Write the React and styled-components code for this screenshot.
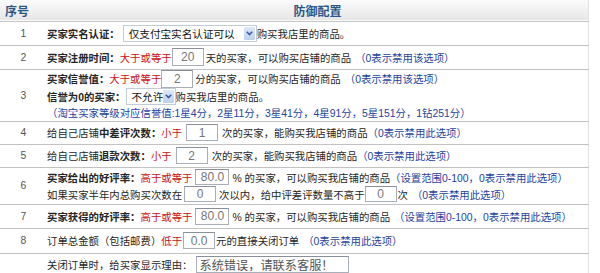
import styled, { createGlobalStyle } from "styled-components";

const GlobalStyle = createGlobalStyle`
  html, body {
    margin: 0;
    padding: 0;
    background: #fff;
  }
  body {
    font-family: "Liberation Sans", "Noto Sans CJK SC", sans-serif;
    font-size: 10.4px;
    color: #262626;
  }
`;

const Table = styled.table`
  width: 589px;
  border-collapse: collapse;
  border-right: 1px solid #e2e2e2;
  table-layout: fixed;
`;

const HeadRow = styled.tr`
  height: 21px;
  background: linear-gradient(#fbfbfb, #e6e6e6);
  border-bottom: 1px solid #c6c6c6;
`;

const HeadCell = styled.th`
  padding: 0 0 0 ${(p) => (p.$left ? "5px" : "0")};
  text-align: ${(p) => (p.$left ? "left" : "center")};
  font-size: 12px;
  font-weight: bold;
  color: #2b5787;
  width: ${(p) => p.$w || "auto"};
`;

const Row = styled.tr`
  height: ${(p) => p.$h}px;
  border-bottom: 1px solid #c2c2c2;
`;

const NumCell = styled.td`
  text-align: center;
  color: #555;
  padding: 0;
  vertical-align: middle;
`;

const Cell = styled.td`
  padding: 0;
  vertical-align: middle;
`;

const Line = styled.div`
  display: flex;
  align-items: center;
  height: ${(p) => p.$h || 17}px;
  white-space: nowrap;
`;

const B = styled.b`
  font-weight: bold;
`;

const Red = styled.span`
  color: #cc1010;
`;

const Blue = styled.span`
  color: #2442a0;
  margin-left: ${(p) => p.$gap || 0}px;
`;

const Input = styled.div`
  box-sizing: border-box;
  width: ${(p) => p.$w || 32}px;
  height: ${(p) => p.$h || 17}px;
  border: 1px solid #a9afb8;
  border-top-color: #8a9099;
  background: #fff;
  color: ${(p) => (p.$wide ? "#555" : "#777")};
  font-size: ${(p) => (p.$wide ? "12.2px" : "12px")};
  display: flex;
  align-items: center;
  justify-content: ${(p) => (p.$wide ? "flex-start" : "center")};
  padding-left: ${(p) => (p.$wide ? "2px" : "0")};
  margin: 0 ${(p) => p.$mr || 0}px 0 ${(p) => p.$ml || 0}px;
  overflow: hidden;
`;

const Select = styled.div`
  box-sizing: border-box;
  width: ${(p) => p.$w}px;
  height: 17px;
  border: 1px solid #c3cbd6;
  background: #fff;
  display: flex;
  align-items: center;
  justify-content: space-between;
  padding-left: 5px;
  margin-left: ${(p) => p.$ml || 0}px;
  font-size: 10.6px;
  color: #111;
`;

const Arrow = styled.span`
  width: 11px;
  height: 13px;
  margin-right: 1px;
  background: linear-gradient(#dde8f8, #bcd0ee);
  border-radius: 1px;
  display: flex;
  align-items: center;
  justify-content: center;
`;

const SelectArrow = () => (
  <Arrow>
    <svg width="7" height="5" viewBox="0 0 7 5">
      <path d="M0.8 0.8 L3.5 3.6 L6.2 0.8" fill="none" stroke="#3b5c9c" strokeWidth="1.6" />
    </svg>
  </Arrow>
);

const App = () => (
  <>
    <GlobalStyle />
    <Table>
      <thead>
        <HeadRow>
          <HeadCell $left $w="42px">序号</HeadCell>
          <HeadCell>防御配置</HeadCell>
        </HeadRow>
      </thead>
      <tbody>
        <Row $h={24}>
          <NumCell>1</NumCell>
          <Cell>
            <Line>
              <B>买家实名认证：</B>
              <Select $w={134} $ml={3}>
                仅支付宝实名认证可以
                <SelectArrow />
              </Select>
              购买我店里的商品。
            </Line>
          </Cell>
        </Row>
        <Row $h={24}>
          <NumCell>2</NumCell>
          <Cell>
            <Line $h={18}>
              <B>买家注册时间：</B>
              <Red>大于或等于</Red>
              <Input $h={18} $mr={2}>20</Input>
              天的买家，可以购买店铺的商品
              <Blue $gap={4}>（0表示禁用该选项）</Blue>
            </Line>
          </Cell>
        </Row>
        <Row $h={51}>
          <NumCell>3</NumCell>
          <Cell>
            <Line $h={18}>
              <B>买家信誉值：</B>
              <Red>大于或等于</Red>
              <Input $h={18} $mr={2}>2</Input>
              分的买家，可以购买店铺的商品
              <Blue $gap={4}>（0表示禁用该选项）</Blue>
            </Line>
            <Line>
              <B>信誉为0的买家：</B>
              <Select $w={50}>
                不允许
                <SelectArrow />
              </Select>
              购买我店里的商品。
            </Line>
            <Line $h={16}>
              <Blue>（淘宝买家等级对应信誉值:1星4分，2星11分，3星41分，4星91分，5星151分，1钻251分）</Blue>
            </Line>
          </Cell>
        </Row>
        <Row $h={23}>
          <NumCell>4</NumCell>
          <Cell>
            <Line>
              给自己店铺<B>中差评次数：</B>
              <Red>小于</Red>
              <Input $ml={4} $mr={4}>1</Input>
              次的买家，能购买我店铺的商品<Blue>（0表示禁用此选项）</Blue>
            </Line>
          </Cell>
        </Row>
        <Row $h={23}>
          <NumCell>5</NumCell>
          <Cell>
            <Line>
              给自己店铺<B>退款次数：</B>
              <Red>小于</Red>
              <Input $ml={4} $mr={4}>2</Input>
              次的买家，能购买我店铺的商品<Blue>（0表示禁用此选项）</Blue>
            </Line>
          </Cell>
        </Row>
        <Row $h={37}>
          <NumCell>6</NumCell>
          <Cell>
            <Line $h={17}>
              <B>买家给出的好评率：</B>
              <Red>高于或等于</Red>
              <Input $w={34} $h={16} $ml={3} $mr={3}>80.0</Input>
              % 的买家，可以购买我店铺的商品<Blue>（设置范围0-100，0表示禁用此选项）</Blue>
            </Line>
            <Line $h={17}>
              如果买家半年内总购买次数在
              <Input $h={16} $ml={2} $mr={3}>0</Input>
              次以内，给中评差评数量不高于
              <Input $h={16} $mr={1}>0</Input>
              次<Blue $gap={4}>（0表示禁用此选项）</Blue>
            </Line>
          </Cell>
        </Row>
        <Row $h={24}>
          <NumCell>7</NumCell>
          <Cell>
            <Line>
              <B>买家获得的好评率：</B>
              <Red>高于或等于</Red>
              <Input $w={34} $ml={3} $mr={3}>80.0</Input>
              % 的买家，可以购买我店铺的商品<Blue $gap={4}>（设置范围0-100，0表示禁用此选项）</Blue>
            </Line>
          </Cell>
        </Row>
        <Row $h={25}>
          <NumCell>8</NumCell>
          <Cell>
            <Line>
              订单总金额（包括邮费）<Red>低于</Red>
              <Input $ml={1} $mr={1}>0.0</Input>
              元的直接关闭订单<Blue $gap={4}>（0表示禁用此选项）</Blue>
            </Line>
          </Cell>
        </Row>
        <Row $h={23}>
          <NumCell />
          <Cell>
            <Line>
              关闭订单时，给买家显示理由：
              <Input $wide $w={153} $ml={4}>系统错误，请联系客服！</Input>
            </Line>
          </Cell>
        </Row>
      </tbody>
    </Table>
  </>
);

export default App;
